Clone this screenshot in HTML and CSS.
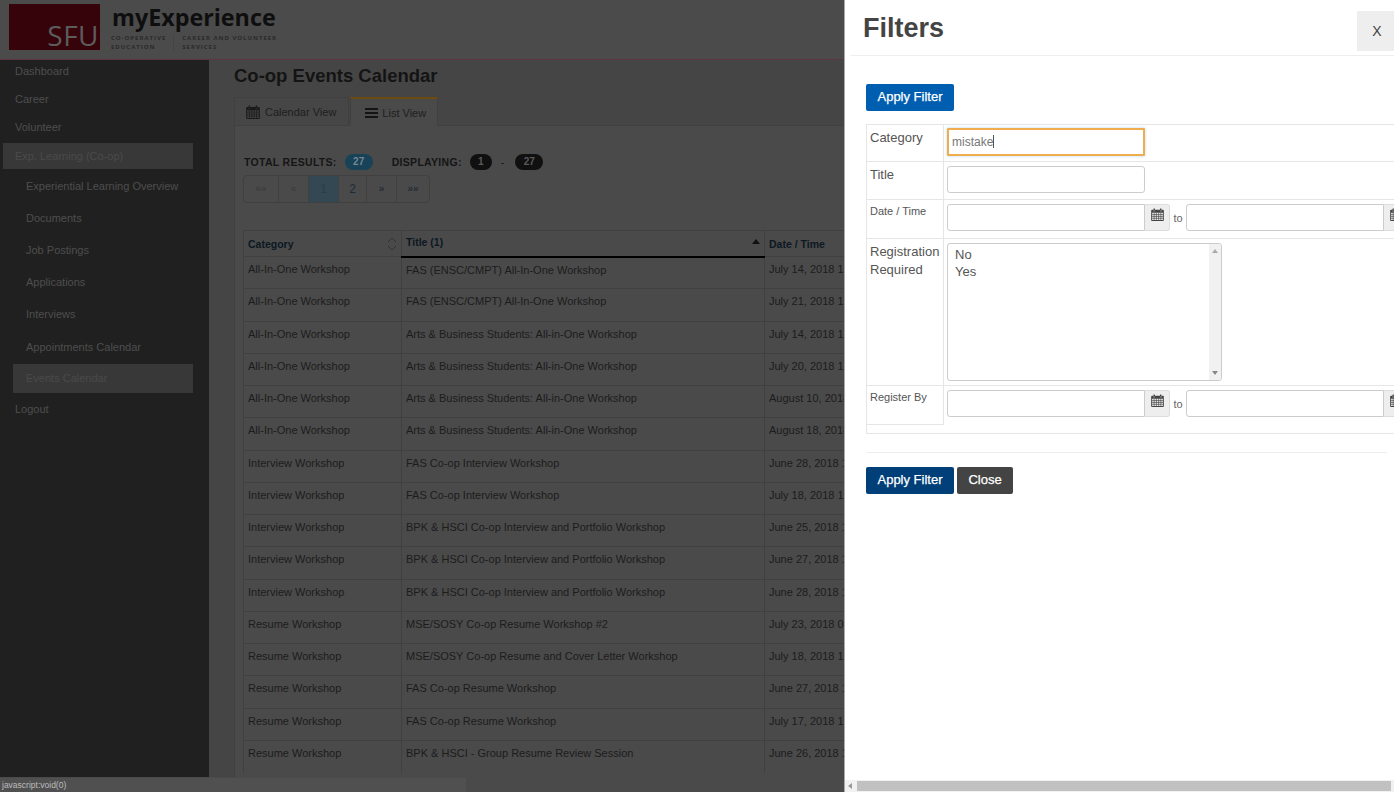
FILE: index.html
```html
<!DOCTYPE html>
<html lang="en">
<head>
<meta charset="utf-8">
<title>Co-op Events Calendar</title>
<link rel="stylesheet" href="styles.css">
</head>
<body>
<svg class="sprites" width="0" height="0" aria-hidden="true">
  <symbol id="cal" viewBox="0 0 14 14">
    <path fill="currentColor" d="M1 2h1.6v1.6h1.6V2h5.6v1.6h1.6V2H13a.8.8 0 0 1 .8.8v10.4a.8.8 0 0 1-.8.8H1a.8.8 0 0 1-.8-.8V2.800A.8.8 0 0 1 1 2zM1.200 5.200v7.800h11.600V5.200zM3 .5h.9a.3.3 0 0 1 .3.3V3H2.700V.8A.3.3 0 0 1 3 .5zm7 0h.9a.3.3 0 0 1 .3.3V3H9.700V.8a.3.3 0 0 1 .3-.3z"/>
    <path stroke="currentColor" stroke-width=".7" fill="none" d="M1 7.100h12M1 9.100h12M1 11.100h12M3.400 5v8M5.800 5v8M8.200 5v8M10.600 5v8"/>
  </symbol>
</svg>

<header class="topbar">
  <div class="logo"><span class="logo-text">SFU</span></div>
  <div class="brand">
    <div class="brand-name">myExperience</div>
    <div class="brand-subs">
      <div class="brand-sub">CO-OPERATIVE<br>EDUCATION</div>
      <div class="brand-sub brand-sub-second">CAREER AND VOLUNTEER<br>SERVICES</div>
    </div>
  </div>
</header>

<div class="layout">
  <nav class="sidebar">
    <a class="nav-top nav-first">Dashboard</a>
    <a class="nav-top">Career</a>
    <a class="nav-top">Volunteer</a>
    <a class="nav-top nav-active">Exp. Learning (Co-op)</a>
    <a class="nav-sub nav-sub-first">Experiential Learning Overview</a>
    <a class="nav-sub">Documents</a>
    <a class="nav-sub">Job Postings</a>
    <a class="nav-sub">Applications</a>
    <a class="nav-sub">Interviews</a>
    <a class="nav-sub">Appointments Calendar</a>
    <a class="nav-sub nav-sub-active">Events Calendar</a>
    <a class="nav-top nav-last">Logout</a>
  </nav>

  <main class="main">
    <h1 class="page-title">Co-op Events Calendar</h1>
    <div class="tabs">
      <a class="tab"><svg class="tab-icon"><use href="#cal"/></svg>Calendar View</a>
      <a class="tab tab-active"><span class="bars"><i></i><i></i><i></i></span>List View</a>
    </div>
    <section class="panel">
      <div class="totals">
        <b class="totals-label">TOTAL RESULTS:</b><span class="badge badge-blue">27</span>
        <b class="totals-label totals-second">DISPLAYING:</b><span class="badge">1</span>
        <span class="totals-dash">-</span><span class="badge badge-wide">27</span>
      </div>
      <div class="pager">
        <a class="page page-off">««</a><a class="page page-off">«</a><a class="page page-current">1</a><a class="page">2</a><a class="page page-arrow">»</a><a class="page page-arrow">»»</a>
      </div>
      <table class="events">
        <thead>
          <tr>
            <th class="col-cat"><span class="sort-wrap">Category<svg class="sort-both" viewBox="0 0 10 14"><path d="M1 5l4-4 4 4M1 9l4 4 4-4" fill="none" stroke="#333" stroke-width="1"/></svg></span></th>
            <th class="col-title th-sorted"><span class="sort-wrap">Title (1)<span class="sort-up"></span></span></th>
            <th class="col-date">Date / Time</th>
          </tr>
        </thead>
        <tbody>
          <tr><td>All-In-One Workshop</td><td>FAS (ENSC/CMPT) All-In-One Workshop</td><td>July 14, 2018 1</td></tr>
          <tr><td>All-In-One Workshop</td><td>FAS (ENSC/CMPT) All-In-One Workshop</td><td>July 21, 2018 1</td></tr>
          <tr><td>All-In-One Workshop</td><td>Arts &amp; Business Students: All-in-One Workshop</td><td>July 14, 2018 1</td></tr>
          <tr><td>All-In-One Workshop</td><td>Arts &amp; Business Students: All-in-One Workshop</td><td>July 20, 2018 1</td></tr>
          <tr><td>All-In-One Workshop</td><td>Arts &amp; Business Students: All-in-One Workshop</td><td>August 10, 2018</td></tr>
          <tr><td>All-In-One Workshop</td><td>Arts &amp; Business Students: All-in-One Workshop</td><td>August 18, 2018</td></tr>
          <tr><td>Interview Workshop</td><td>FAS Co-op Interview Workshop</td><td>June 28, 2018 1</td></tr>
          <tr><td>Interview Workshop</td><td>FAS Co-op Interview Workshop</td><td>July 18, 2018 1</td></tr>
          <tr><td>Interview Workshop</td><td>BPK &amp; HSCI Co-op Interview and Portfolio Workshop</td><td>June 25, 2018 1</td></tr>
          <tr><td>Interview Workshop</td><td>BPK &amp; HSCI Co-op Interview and Portfolio Workshop</td><td>June 27, 2018 1</td></tr>
          <tr><td>Interview Workshop</td><td>BPK &amp; HSCI Co-op Interview and Portfolio Workshop</td><td>June 28, 2018 1</td></tr>
          <tr><td>Resume Workshop</td><td>MSE/SOSY Co-op Resume Workshop #2</td><td>July 23, 2018 0</td></tr>
          <tr><td>Resume Workshop</td><td>MSE/SOSY Co-op Resume and Cover Letter Workshop</td><td>July 18, 2018 1</td></tr>
          <tr><td>Resume Workshop</td><td>FAS Co-op Resume Workshop</td><td>June 27, 2018 1</td></tr>
          <tr><td>Resume Workshop</td><td>FAS Co-op Resume Workshop</td><td>July 17, 2018 1</td></tr>
          <tr><td>Resume Workshop</td><td>BPK &amp; HSCI - Group Resume Review Session</td><td>June 26, 2018 1</td></tr>
        </tbody>
      </table>
    </section>
  </main>
</div>

<div class="status">javascript:void(0)</div>

<aside class="drawer">
  <div class="drawer-head">
    <h2 class="drawer-title">Filters</h2>
    <button class="drawer-x">X</button>
  </div>
  <div class="drawer-body">
    <button class="btn btn-primary">Apply Filter</button>
    <div class="filters">
      <div class="f-row">
        <div class="f-label">Category</div>
        <div class="f-value"><div class="input input-focus">mistake<span class="caret"></span></div></div>
      </div>
      <div class="f-row">
        <div class="f-label">Title</div>
        <div class="f-value"><div class="input"></div></div>
      </div>
      <div class="f-row f-row-date">
        <div class="f-label f-label-small">Date / Time</div>
        <div class="f-value">
          <div class="input input-date"></div><span class="addon"><svg class="addon-icon"><use href="#cal"/></svg></span>
          <span class="to">to</span>
          <div class="input input-date"></div><span class="addon"><svg class="addon-icon"><use href="#cal"/></svg></span>
        </div>
      </div>
      <div class="f-row f-row-select">
        <div class="f-label">Registration Required</div>
        <div class="f-value">
          <div class="listbox">
            <div class="list-options"><div>No</div><div>Yes</div></div>
            <div class="list-scroll"><span class="arrow-up"></span><span class="arrow-down"></span></div>
          </div>
        </div>
      </div>
      <div class="f-row f-row-last">
        <div class="f-label f-label-small f-label-last">Register By</div>
        <div class="f-value">
          <div class="input input-date"></div><span class="addon"><svg class="addon-icon"><use href="#cal"/></svg></span>
          <span class="to">to</span>
          <div class="input input-date"></div><span class="addon"><svg class="addon-icon"><use href="#cal"/></svg></span>
        </div>
      </div>
    </div>
    <hr class="rule">
    <div class="actions">
      <button class="btn btn-navy">Apply Filter</button>
      <button class="btn btn-dark">Close</button>
    </div>
  </div>
  <div class="hscroll"><span class="hscroll-arrow"></span><span class="hscroll-thumb"></span></div>
</aside>
</body>
</html>
```
FILE: styles.css
```css
* { box-sizing: border-box; }
html, body { height: 100%; }
body {
  margin: 0;
  height: 792px;
  overflow: hidden;
  background: #454545;
  font-family: "Liberation Sans", Arial, sans-serif;
  font-size: 11px;
  color: #1c1c1c;
  display: flex;
  flex-direction: column;
}
.sprites { position: absolute; }

/* top bar */
.topbar {
  height: 60px;
  flex: none;
  display: flex;
  background: #4b4b4b;
  border-bottom: 1px solid #5a3840;
  padding: 4px 0 0 9px;
}
.logo {
  width: 91px;
  height: 46px;
  background: #36030a;
  display: flex;
  align-items: flex-end;
  justify-content: flex-end;
  padding: 0 1px 0 0;
}
.logo-text {
  font-family: "Open Sans", sans-serif;
  font-size: 28px;
  line-height: 30px;
  letter-spacing: .5px;
  color: #5c5c5c;
}
.brand { margin-left: 12px; }
.brand-name {
  font-family: "Open Sans", sans-serif;
  font-weight: 700;
  font-size: 23.300px;
  line-height: 26px;
  color: #0e0e0e;
}
.brand-subs { display: flex; margin-top: 4px; margin-left: -1px; }
.brand-sub {
  font-family: "Open Sans", sans-serif;
  font-weight: 700;
  font-size: 6px;
  line-height: 8.500px;
  letter-spacing: 1px;
  color: #2a2a2a;
}
.brand-sub-second {
  margin-left: 7px;
  padding-left: 8px;
  border-left: 1px solid #444;
}

/* layout: the page behind the drawer ends where the drawer begins */
.layout { flex: 1; width: 844px; display: flex; min-height: 0; overflow: hidden; }
.sidebar {
  width: 209px;
  flex: none;
  background: #202020;
  color: #4e4e4e;
  display: flex;
  flex-direction: column;
  padding-left: 3px;
}
.nav-top { display: block; padding-left: 12px; height: 28.200px; line-height: 23px; }
.nav-active {
  width: 190px;
  height: 26px;
  background: #383838;
  margin-top: -2px;
  line-height: 26px;
  color: #4a4a4a;
}
.nav-sub {
  display: block;
  margin-left: 10px;
  width: 180px;
  height: 32.200px;
  padding-left: 13px;
  line-height: 32px;
}
.nav-sub-first { margin-top: 1px; }
.nav-sub-active { background: #383838; height: 29px; line-height: 29px; color: #4a4a4a; margin-top: 1px; }
.nav-last { margin-top: 3px; line-height: 27px; }

/* main */
.main { flex: 1; min-width: 0; padding: 0 0 0 25px; overflow: hidden; background: #454545; }
.page-title {
  margin: 4px 0 0;
  font-size: 18.500px;
  line-height: 24px;
  font-weight: 700;
  color: #141414;
}
.tabs { display: flex; margin-top: 9px; height: 29px; position: relative; z-index: 1; }
.tab {
  display: flex;
  align-items: center;
  height: 29px;
  padding: 0 12px 0 11px;
  border: 1px solid #404040;
  background: #464646;
  color: #1e1e1e;
}
.tab-active {
  margin-left: 1px;
  background: #4a4a4a;
  border-top: 2px solid #6c4a10;
  border-bottom-color: #4a4a4a;
  padding: 1px 11px 0 14px;
}
.tab-icon { width: 14px; height: 14px; margin-right: 5px; color: #1a1a1a; }
.bars { width: 13px; margin-right: 4px; display: flex; flex-direction: column; gap: 2px; }
.bars i { height: 2px; background: #141414; }
.panel {
  background: #4a4a4a;
  border-left: 1px solid #404040;
  border-top: 1px solid #404040;
  margin-top: -1px;
  padding: 28px 0 0 8px;
  min-height: 700px;
}
.totals {
  display: flex;
  align-items: center;
  height: 16px;
  margin-left: 1px;
  font-size: 10.500px;
  color: #151515;
}
.totals-label { letter-spacing: .3px; }
.totals-second { margin-left: 19px; }
.badge {
  margin-left: 8px;
  min-width: 22px;
  height: 16px;
  border-radius: 8px;
  background: #101010;
  color: #5a5a5a;
  text-align: center;
  line-height: 16px;
  font-weight: 700;
  font-size: 10px;
}
.badge-blue { width: 28px; background: #184258; color: #75868f; }
.badge-wide { width: 28px; margin-left: 18px; }
.totals-dash { margin-left: 9px; margin-right: -7px; }
.pager {
  display: inline-flex;
  margin-top: 5px;
  height: 28px;
  border: 1px solid #404040;
  border-radius: 4px;
}
.page {
  height: 26px;
  line-height: 26px;
  text-align: center;
  width: 28px;
  border-left: 1px solid #404040;
  font-size: 12px;
  color: #1a2c3a;
}
.page:first-child { border-left: 0; width: 34px; }
.page-off { color: #383838; font-size: 10px; }
.page:nth-child(2), .page:nth-child(3), .page:nth-child(5) { width: 30px; }
.page:last-child { width: 33px; }
.page-current { background: #334852; color: #2a3d48; }
.page-arrow { font-size: 10px; color: #17222c; }

/* events table */
.events {
  margin-top: 27px;
  border-collapse: collapse;
  table-layout: fixed;
  width: 601px;
  color: #1c1c1c;
}
.col-cat { width: 158px; }
.col-title { width: 363px; }
.events th {
  height: 26px;
  text-align: left;
  padding: 0 4px;
  font-size: 10.500px;
  color: #0c1822;
  font-weight: 700;
  border-top: 1px solid #404040;
  border-left: 1px solid #404040;
  vertical-align: middle;
}
.events th.th-sorted { border-bottom: 2px solid #000; padding-bottom: 3px; }
.sort-wrap { display: flex; align-items: center; justify-content: space-between; }
.sort-both { width: 10px; height: 14px; }
.sort-up {
  width: 0; height: 0; margin-right: 0;
  border-left: 4px solid transparent;
  border-right: 4px solid transparent;
  border-bottom: 5px solid #111;
}
.events td {
  height: 32.250px;
  padding: 4px 0 0 4px;
  vertical-align: top;
  line-height: 16px;
  white-space: nowrap;
  overflow: hidden;
  border-left: 1px solid #404040;
  border-top: 1px solid #404040;
}

/* status bubble */
.status {
  position: absolute;
  left: 0;
  bottom: 0;
  width: 467px;
  height: 15px;
  background: #505050;
  border-top: 1px solid #4a4a4a;
  border-right: 1px solid #4a4a4a;
  color: #bdbdbd;
  font-size: 8.500px;
  line-height: 15px;
  padding-left: 2px;
}

/* drawer */
.drawer {
  position: absolute;
  left: 844px;
  top: 0;
  width: 550px;
  height: 792px;
  background: #fff;
  border-left: 1px solid #a9a9a9;
  color: #555;
  display: flex;
  flex-direction: column;
  overflow: hidden;
}
.drawer-head {
  flex: none;
  height: 56px;
  margin-left: 6px;
  border-bottom: 1px solid #eee;
  display: flex;
  justify-content: space-between;
  align-items: flex-start;
}
.drawer-title {
  margin: 12px 0 0 12px;
  font-size: 27px;
  line-height: 32px;
  font-weight: 700;
  color: #444;
}
.drawer-x {
  margin-top: 11px;
  width: 37px;
  height: 40px;
  border: 0;
  padding: 0 0 0 3px;
  background: #eee;
  color: #444;
  font: 14px "Liberation Sans", Arial, sans-serif;
}
.drawer-body { flex: 1; min-height: 0; padding: 28px 0 0 21px; overflow: hidden; }
.btn {
  display: block;
  height: 27px;
  border: 1px solid transparent;
  border-radius: 2px;
  padding: 0 0 2px;
  color: #fff;
  font: 13px "Liberation Sans", Arial, sans-serif;
  -webkit-text-stroke: .25px #fff;
}
.btn-primary, .btn-navy { width: 88px; }
.btn-primary { background: #005eb0; }
.btn-navy { background: #003f78; }
.btn-dark { width: 56px; background: #444; }
.filters {
  margin-top: 13px;
  width: 560px;
  border-top: 1px solid #e6e6e6;
  border-bottom: 1px solid #e6e6e6;
  border-left: 1px solid #e6e6e6;
  padding-bottom: 8px;
}
.f-row {
  display: flex;
  height: 37px;
  border-bottom: 1px solid #e6e6e6;
}
.f-row:nth-child(2) { height: 38px; }
.f-row-date { height: 39px; }
.f-row-select { height: 147px; }
.f-row-last { height: 39px; border-bottom: 0; }
.f-label {
  width: 77px;
  flex: none;
  padding: 4px 3px 0 3px;
  font-size: 13px;
  line-height: 18px;
  color: #555;
  border-right: 1px solid #e6e6e6;
}
.f-row .f-label-small { font-size: 11px; padding-top: 2px; }
.f-label-last { border-bottom: 1px solid #e6e6e6; }
.f-value { flex: 1; display: flex; padding: 4px 0 0 3px; align-items: flex-start; }
.input {
  width: 198px;
  height: 27px;
  border: 1px solid #ccc;
  border-radius: 3px;
  background: #fff;
  font-size: 12px;
  line-height: 25px;
  padding-left: 4px;
  color: #777;
}
.input-focus {
  height: 28px;
  margin-top: -1px;
  border: 2px solid #f0ad4e;
  border-radius: 1px;
  line-height: 25px;
  padding-left: 3px;
  box-shadow: 0 0 3px rgba(102, 175, 233, .5);
}
.caret {
  display: inline-block;
  width: 1px;
  height: 13px;
  vertical-align: -2px;
  background: #555;
}
.input-date { border-radius: 3px 0 0 3px; flex: none; }
.addon {
  width: 25px;
  height: 27px;
  flex: none;
  background: #eee;
  border: 1px solid #ddd;
  border-left: 0;
  border-radius: 0 3px 3px 0;
  display: flex;
  justify-content: center;
  padding-top: 3px;
  color: #444;
}
.addon-icon { width: 13px; height: 13px; }
.to { width: 16px; flex: none; text-align: center; font-size: 11px; line-height: 29px; color: #666; }
.listbox {
  width: 275px;
  height: 138px;
  border: 1px solid #ccc;
  border-radius: 3px;
  display: flex;
  overflow: hidden;
}
.list-options { flex: 1; padding: 2px 0 0 7px; font-size: 13px; line-height: 17px; color: #555; }
.list-scroll {
  width: 12px;
  background: #f1f1f1;
  display: flex;
  flex-direction: column;
  justify-content: space-between;
  align-items: center;
  padding: 5px 0;
}
.arrow-up, .arrow-down { width: 0; height: 0; border-left: 3px solid transparent; border-right: 3px solid transparent; }
.arrow-up { border-bottom: 4px solid #aaa; }
.arrow-down { border-top: 4px solid #888; }
.rule { width: 521px; margin: 18px 0 14px; border: 0; border-top: 1px solid #eee; }
.actions { display: flex; gap: 3px; }

/* horizontal scrollbar */
.hscroll {
  flex: none;
  height: 12px;
  background: #f1f1f1;
  display: flex;
  align-items: center;
  padding: 0 3px;
}
.hscroll-arrow {
  width: 0; height: 0;
  margin-right: 5px;
  border-top: 3px solid transparent;
  border-bottom: 3px solid transparent;
  border-right: 4px solid #999;
}
.hscroll-thumb { flex: 1; height: 10px; background: #c1c1c1; }
```
